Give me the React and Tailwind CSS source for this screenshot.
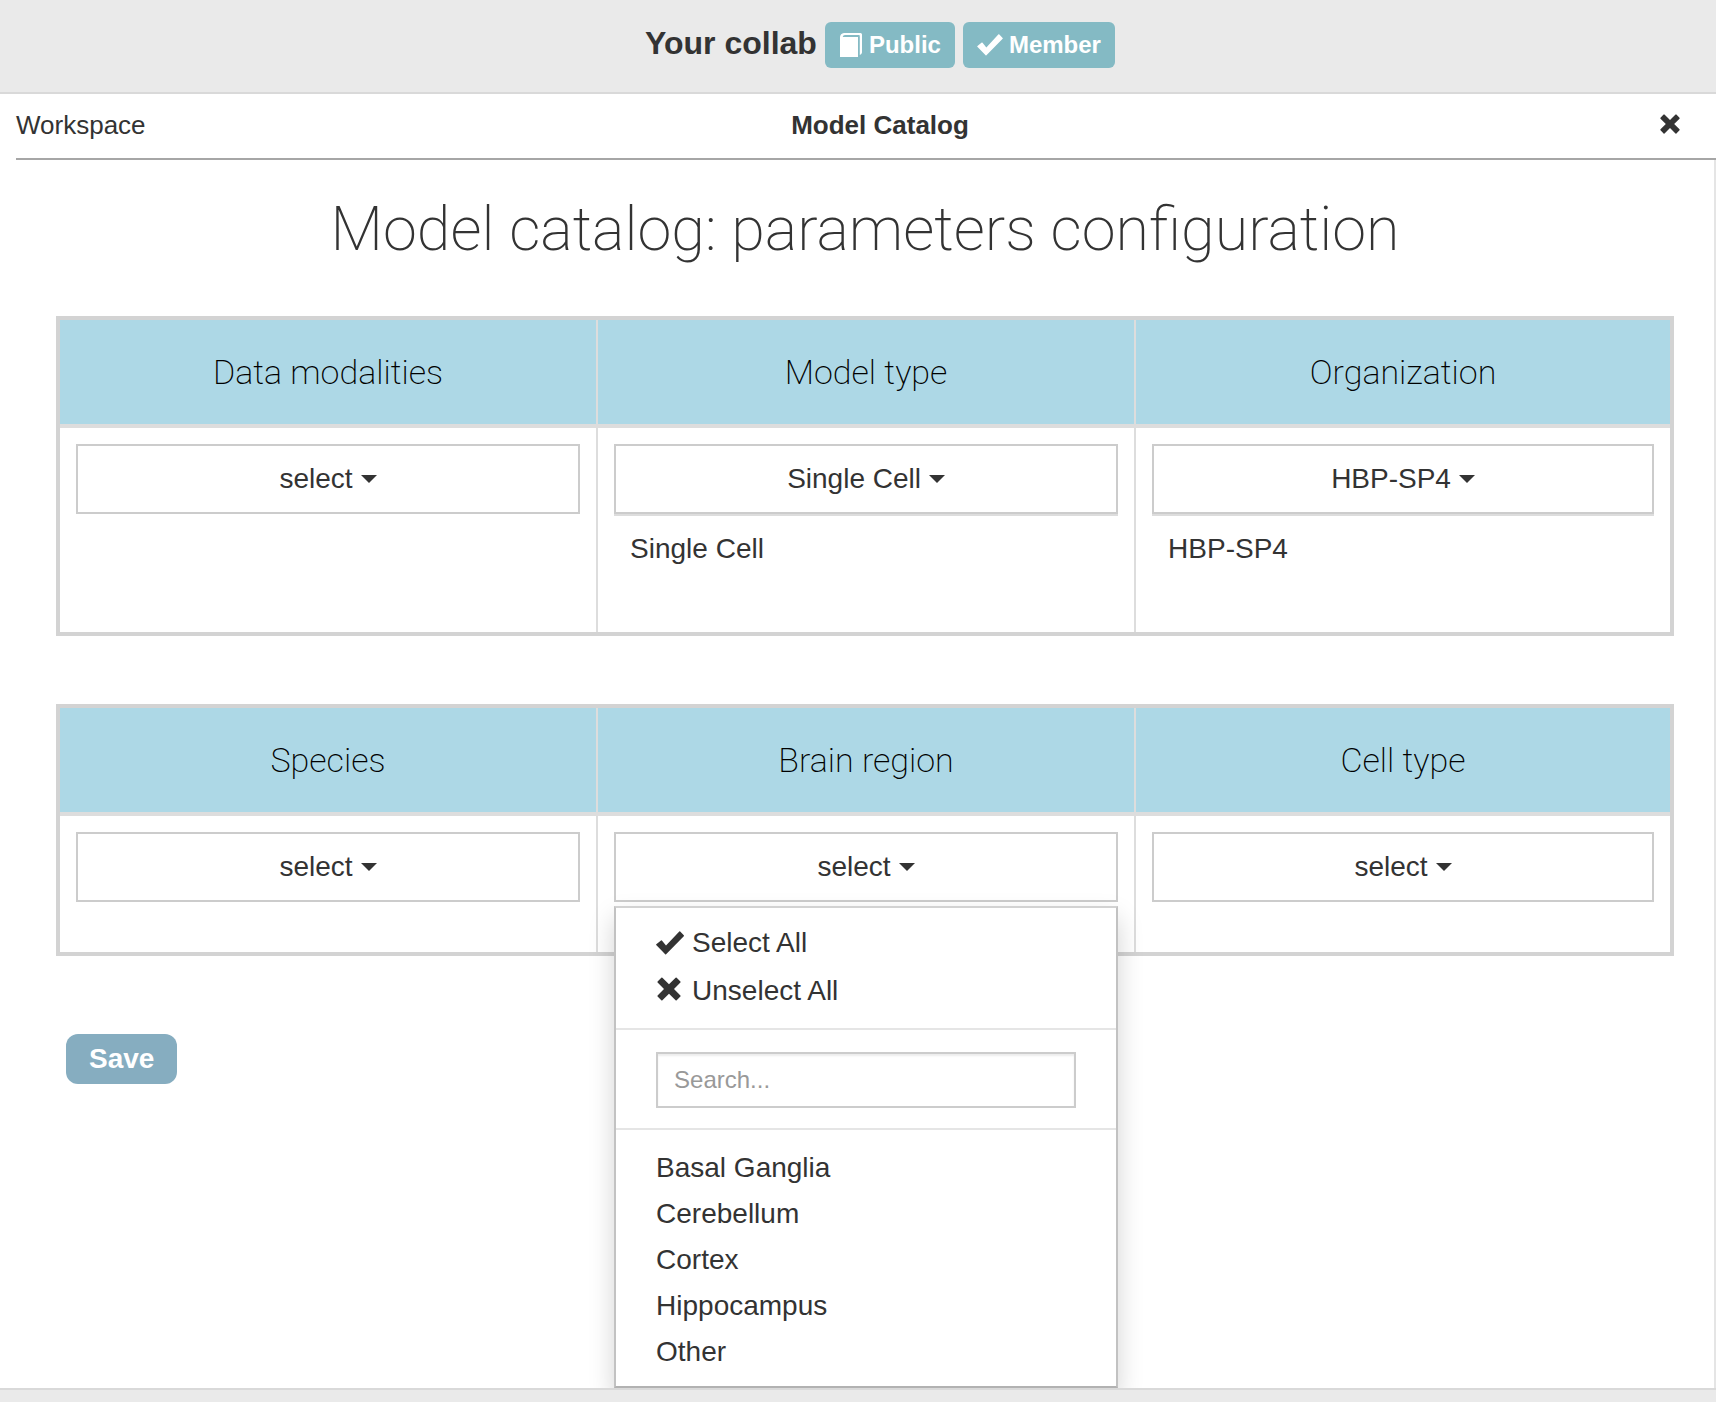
import { useState } from 'react';

function CheckIcon({ className }) {
  return (
    <svg viewBox="0 0 28 24" fill="currentColor" className={className} aria-hidden="true">
      <path d="M0.3 13.2 5 9.4Q5.5 9.1 5.9 9.6L10 14.6 23.3 0.4Q23.8 0 24.2 0.5L27.8 4.3Q28.2 4.8 27.8 5.3L10.1 23.3Q9.6 23.8 9.2 23.3L0.2 14Q-0.1 13.6 0.3 13.2Z" />
    </svg>
  );
}

function CrossIcon({ className }) {
  return (
    <svg viewBox="0 0 24 24" fill="currentColor" className={className} aria-hidden="true">
      <path d="M0.6 4.5 4.3 0.7Q4.9 0.2 5.4 0.7L12 7.2 18.6 0.7Q19.1 0.2 19.7 0.7L23.4 4.5Q23.9 5.1 23.4 5.6L17 12 23.4 18.4Q23.9 18.9 23.4 19.5L19.7 23.3Q19.1 23.8 18.6 23.3L12 16.8 5.4 23.3Q4.9 23.8 4.3 23.3L0.6 19.5Q0.1 18.9 0.6 18.4L7 12 0.6 5.6Q0.1 5.1 0.6 4.5Z" />
    </svg>
  );
}

function BookIcon({ className }) {
  return (
    <svg viewBox="0 0 22 24" fill="currentColor" className={className} aria-hidden="true">
      <path d="M0 24V4Q.3 .4 4 0H20.5Q22 0 22 1.5V19.5Q21.8 21.3 19.8 22V3Q19.8 2 19 2H5Q3 2.2 2.7 4H18V24Z" />
    </svg>
  );
}

function Caret() {
  return (
    <svg viewBox="0 0 16 8" fill="currentColor" className="h-2 w-4" aria-hidden="true">
      <path d="M0 0H16L8 8Z" />
    </svg>
  );
}

const tables = [
  {
    body: 'h-[204px]',
    columns: [
      { title: 'Data modalities', chosen: [] },
      { title: 'Model type', chosen: ['Single Cell'] },
      { title: 'Organization', chosen: ['HBP-SP4'] },
    ],
  },
  {
    body: 'h-[136px]',
    columns: [
      { title: 'Species', chosen: [] },
      {
        title: 'Brain region',
        chosen: [],
        options: ['Basal Ganglia', 'Cerebellum', 'Cortex', 'Hippocampus', 'Other'],
      },
      { title: 'Cell type', chosen: [] },
    ],
  },
];

function Menu({ title, options }) {
  const [query, setQuery] = useState('');
  const shown = options.filter((o) => o.toLowerCase().includes(query.toLowerCase()));
  return (
    <div className="absolute inset-x-0 top-full z-10 mt-1 border-2 border-[#c2c2c2] border-t-[#d2d2d2] border-b-[#b2b2b2] bg-white py-[11px] shadow-[0_12px_24px_rgba(0,0,0,0.175)]">
      <button type="button" className="flex h-12 w-full items-center gap-2 px-10">
        <CheckIcon className="h-6 w-7" />
        Select All
      </button>
      <button type="button" className="flex h-12 w-full items-center gap-2 px-10">
        <span className="flex w-7 pl-px pb-1">
          <CrossIcon className="h-6 w-6" />
        </span>
        Unselect All
      </button>
      <div className="mt-[13px] border-y-2 border-[#e5e5e5] px-10 pt-[22px] pb-5">
        <input
          type="text"
          aria-label={`Search ${title}`}
          placeholder="Search..."
          value={query}
          onChange={(e) => setQuery(e.target.value)}
          className="block h-14 w-full border-2 border-[#ccc] bg-white px-4 text-2xl shadow-[inset_0_2px_2px_rgba(0,0,0,0.075)] placeholder:text-[#999]"
        />
      </div>
      <ul className="pt-[15px]">
        {shown.map((o) => (
          <li key={o}>
            <button type="button" className="block w-full px-10 text-left leading-[46px]">
              {o}
            </button>
          </li>
        ))}
      </ul>
    </div>
  );
}

function Picker({ title, chosen, options }) {
  return (
    <>
      <div className="relative">
        <button
          type="button"
          aria-label={title}
          aria-expanded={Boolean(options)}
          className="flex h-[70px] w-full items-center justify-center gap-2 border-2 border-[#ccc] bg-white"
        >
          {chosen[0] || 'select'}
          <Caret />
        </button>
        {options && <Menu title={title} options={options} />}
      </div>
      {chosen.length > 0 && (
        <ul className="border-t-2 border-[#ddd] px-4 pt-[13px]">
          {chosen.map((c) => (
            <li key={c} className="leading-10">
              {c}
            </li>
          ))}
        </ul>
      )}
    </>
  );
}

export default function App() {
  return (
    <div className="flex min-h-screen flex-col overflow-hidden bg-white font-['Liberation_Sans',Arial,sans-serif] text-[#333]">
      <header className="border-b-2 border-[#d9d9d9] bg-[#eaeaea]">
        <div className="-mr-7 flex items-start justify-center gap-2 pt-[22px] pb-6 pl-4 font-bold">
          <h1 className="text-[32px] leading-[42px]">Your collab</h1>
          <span className="flex h-[46px] items-center gap-1.5 rounded-md bg-[#84bac4] px-3.5 text-2xl text-white">
            <BookIcon className="h-6 w-6" />
            Public
          </span>
          <span className="flex h-[46px] items-center gap-1.5 rounded-md bg-[#84bac4] px-3.5 text-2xl text-white">
            <CheckIcon className="h-[22px] w-[26px]" />
            Member
          </span>
        </div>
      </header>

      <nav className="-mr-7 ml-4 grid h-[66px] grid-cols-3 items-center border-b-2 border-[#a6a6a6] pb-0.5 text-[26px]">
        <a href="#workspace">Workspace</a>
        <h2 className="text-center font-bold">Model Catalog</h2>
        <button type="button" aria-label="Close" className="mr-16 justify-self-end pb-0.5">
          <CrossIcon className="h-5 w-5" />
        </button>
      </nav>

      <main className="flex-1 border-r-2 border-[#e5e5e5] pr-10 pl-14 text-[28px]">
        <h2 className="pt-[29px] pb-[47px] text-center font-['Roboto',sans-serif] text-[61px] leading-20 font-extralight">
          Model catalog: parameters configuration
        </h2>
        <div className="flex flex-col gap-[68px]">
          {tables.map((t) => (
            <table
              key={t.body}
              className="w-full table-fixed border-separate border-spacing-0 border-4 border-[#d3d3d3]"
            >
              <thead>
                <tr>
                  {t.columns.map((c) => (
                    <th
                      key={c.title}
                      scope="col"
                      className="h-[108px] w-[33.42%] border-r-2 border-b-4 border-[#ddd] bg-[#add8e6] font-['Roboto',sans-serif] text-[34px] font-extralight text-black last:w-auto last:border-r-0"
                    >
                      {c.title}
                    </th>
                  ))}
                </tr>
              </thead>
              <tbody>
                <tr className={t.body}>
                  {t.columns.map((c) => (
                    <td key={c.title} className="border-r-2 border-[#ddd] px-4 pt-4 align-top last:border-r-0">
                      <Picker {...c} />
                    </td>
                  ))}
                </tr>
              </tbody>
            </table>
          ))}
        </div>
        <button
          type="button"
          className="mt-[78px] ml-2.5 h-[50px] rounded-xl bg-[#86adc0] px-[23px] font-bold text-white"
        >
          Save
        </button>
      </main>

      <footer className="relative z-20 h-3.5 border-t-2 border-[#d9d9d9] bg-[#eaeaea]" />
    </div>
  );
}
